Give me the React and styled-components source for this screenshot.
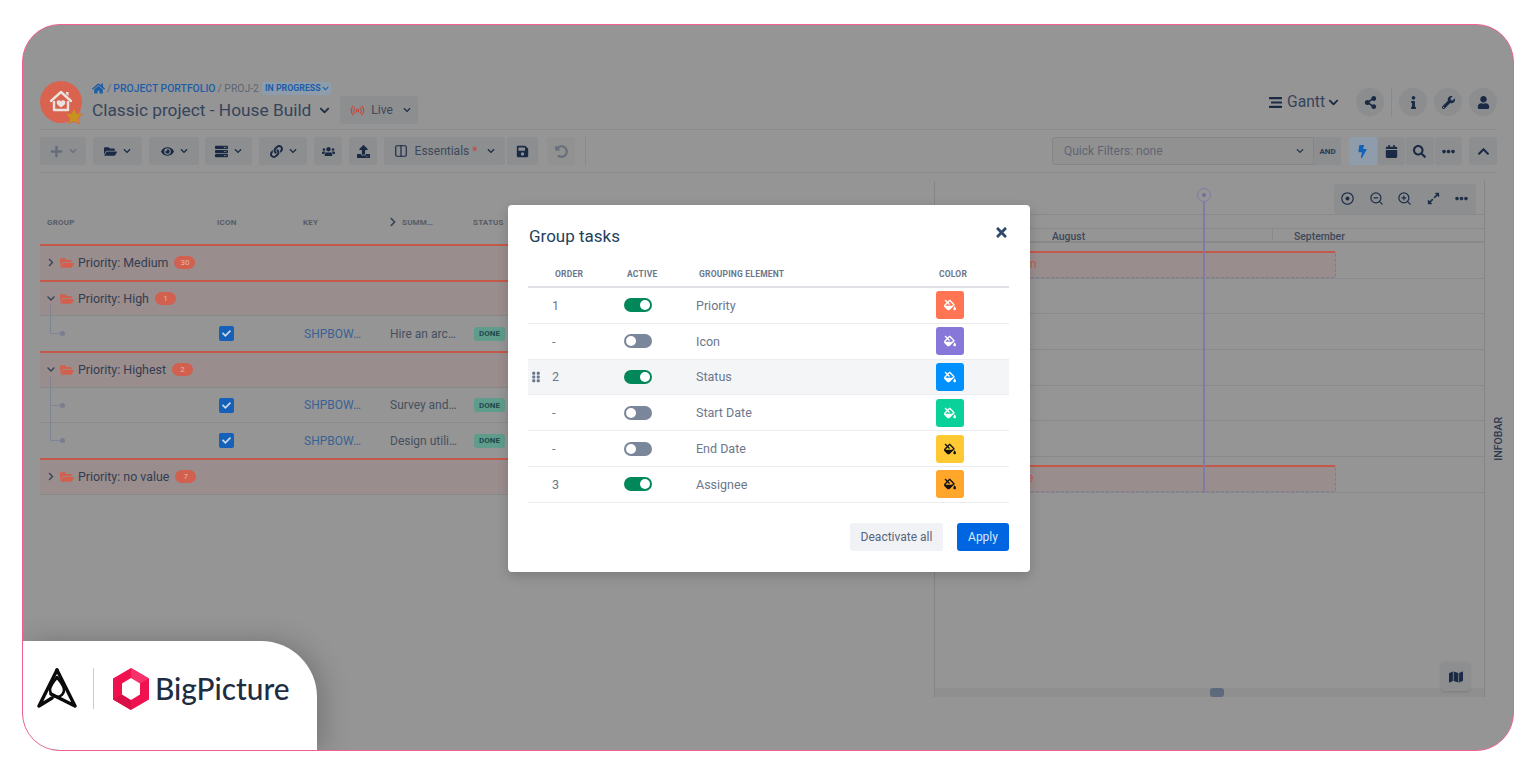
import React from 'react';
import styled, { createGlobalStyle } from 'styled-components';
import {
  FaHome, FaFolderOpen, FaEye, FaServer, FaLink, FaUsers, FaSave, FaBolt, FaCalendar, FaSearch,
  FaEllipsisH, FaChevronUp, FaShareAlt, FaInfo, FaWrench, FaUser, FaTimes, FaFillDrip, FaPlus,
  FaExpandAlt, FaRegDotCircle, FaMap, FaCheck, FaUpload, FaChevronDown, FaChevronRight, FaGripVertical,
  FaUndoAlt,
} from 'react-icons/fa';
import { Radio, Columns2, ZoomIn, ZoomOut } from 'lucide-react';

const GlobalStyle = createGlobalStyle`
  html, body {
    margin: 0;
    height: 100%;
    overflow: hidden;
    background: #fff;
    font-family: Roboto, "Liberation Sans", sans-serif;
  }
  * { box-sizing: border-box; }
`;

const Frame = styled.div`
  position: relative;
  width: 1492px;
  height: 727px;
  margin: 24px 0 0 22px;
  padding: 56px 16px 0 17px;
  background: #959595;
  border: 1px solid #f2608f;
  border-radius: 38px;
  overflow: hidden;
`;

const Header = styled.header`
  display: flex;
  justify-content: space-between;
  height: 49px;
  border-bottom: 1px solid #898989;
`;

const HeaderLeft = styled.div`
  display: flex;
  gap: 8px;
`;

const TitleColumn = styled.div`
  display: flex;
  flex-direction: column;
`;

const Breadcrumb = styled.div`
  display: flex;
  align-items: center;
  gap: 2px;
  height: 14px;
  font-size: 10.4px;
  color: #5e6673;
  svg { color: #1c5ea8; font-size: 13px; }
`;

const CrumbLink = styled.span`
  color: #1c5ea8;
  font-weight: 500;
`;

const StatusTag = styled.span`
  display: inline-flex;
  align-items: center;
  gap: 1px;
  margin-left: 1px;
  padding: 0 2px 0 3px;
  height: 13px;
  border-radius: 2px;
  background: #8e9cab;
  color: #1c5ea8;
  font-size: 8.8px;
  font-weight: 700;
  svg { font-size: 7px; margin: 0; }
`;

const TitleRow = styled.div`
  display: flex;
  align-items: center;
  height: 30px;
  color: #36445a;
  svg { color: #1f2d45; }
`;

const Title = styled.h1`
  margin: 0 8px 0 0;
  font-size: 17.3px;
  font-weight: 400;
`;

const LiveButton = styled.button`
  display: flex;
  align-items: center;
  height: 28px;
  width: 78px;
  margin-left: 10px;
  padding: 0 0 0 10px;
  gap: 6px;
  border: 0;
  border-radius: 3px;
  background: #8d8e90;
  color: #3d4859;
  font: 400 12px Roboto, sans-serif;
`;

const HeaderRight = styled.div`
  display: flex;
  align-items: center;
  height: 28px;
  margin-top: 7px;
`;

const ViewSwitch = styled.div`
  display: flex;
  align-items: center;
  gap: 3px;
  margin-right: 17px;
  color: #36445a;
  font-size: 15.6px;
  svg { color: #1a2a44; }
`;

const RoundButton = styled.button`
  display: flex;
  align-items: center;
  justify-content: center;
  width: 28px;
  height: 28px;
  margin-left: ${p => p.$gap || 0}px;
  padding: 0;
  border: 0;
  border-radius: 50%;
  background: #8c8d8f;
  color: #1a2a44;
  font-size: 13px;
`;

const HeaderSplit = styled.span`
  width: 1px;
  height: 28px;
  margin-left: 7px;
  background: #898989;
`;

const Toolbar = styled.div`
  display: flex;
  justify-content: space-between;
  height: 43px;
  padding-top: 7px;
  border-bottom: 1px solid #898989;
`;

const ToolGroup = styled.div`
  display: flex;
  height: 28px;
`;

const ToolButton = styled.button`
  display: flex;
  align-items: center;
  justify-content: center;
  gap: ${p => p.$iconGap || 6}px;
  width: ${p => p.$w || 28}px;
  height: 28px;
  margin-left: ${p => p.$gap ?? 7}px;
  padding: 0;
  border: 0;
  border-radius: 3px;
  background: ${p => (p.$active ? '#8f9cab' : p.$soft ? '#919192' : '#8d8e90')};
  color: ${p => (p.$active ? '#1262b8' : p.$muted ? '#656d7b' : '#1a2a44')};
  font: 400 13px Roboto, sans-serif;
`;

const ToolLabel = styled.span`
  font-size: 12px;
  color: #3d4859;
  i { color: #c2493f; font-style: normal; }
`;

const ToolSplit = styled.span`
  width: 1px;
  height: 28px;
  margin-left: 10px;
  background: #898989;
`;

const QuickFilter = styled.div`
  display: flex;
  align-items: center;
  justify-content: space-between;
  width: 262px;
  padding: 0 9px 0 11px;
  border: 1px solid #858585;
  border-radius: 3px 0 0 3px;
  background: #919191;
  color: #5f6673;
  font-size: 12px;
  svg { color: #2b3950; }
`;

const AndTag = styled.span`
  display: flex;
  align-items: center;
  justify-content: center;
  width: 27px;
  border-radius: 0 3px 3px 0;
  background: #8d8e90;
  color: #2c3a50;
  font-size: 8px;
  font-weight: 700;
`;

const Main = styled.div`
  display: flex;
  height: 524px;
  margin-right: -14px;
`;

const TablePane = styled.section`
  width: 894px;
  flex: none;
`;

const TableHead = styled.div`
  display: grid;
  grid-template-columns: 177px 86px 85px 85px 1fr;
  align-items: center;
  height: 71px;
  padding-top: 27px;
  color: #565c67;
  font-size: 8px;
  font-weight: 700;
  letter-spacing: 0.2px;
`;

const HeadCell = styled.span`
  display: flex;
  align-items: center;
  gap: 4px;
  padding-left: ${p => p.$pad || 0}px;
  svg { color: #37445a; font-size: 10px; }
`;

const GroupRow = styled.div`
  display: flex;
  align-items: center;
  height: 35.7px;
  padding-left: 7px;
  border-top: 2px solid #c4584a;
  background: #9a8d8d;
  color: #323e52;
  font-size: 12.4px;
`;

const Caret = styled.span`
  display: flex;
  justify-content: center;
  width: 8px;
  font-size: 9px;
  color: #36445a;
`;

const Folder = styled.span`
  display: flex;
  margin: 0 4px 0 5px;
  color: #d2604f;
  font-size: 14px;
`;

const Badge = styled.span`
  display: flex;
  align-items: center;
  justify-content: center;
  width: 21px;
  height: 13px;
  margin-left: 6px;
  border-radius: 7px;
  background: #d2604f;
  color: #e6b3aa;
  font-size: 8px;
`;

const TaskRow = styled.div`
  display: grid;
  grid-template-columns: 177px 86px 85px 85px 1fr;
  align-items: center;
  height: 35.7px;
  border-top: 1px solid #898989;
  color: #45505f;
  font-size: 12px;
`;

const Tree = styled.span`
  position: relative;
  display: block;
  height: 100%;
  &::before {
    content: '';
    position: absolute;
    left: 10px;
    top: ${p => (p.$first ? -12 : 0)}px;
    bottom: ${p => (p.$last ? 17 : 0)}px;
    width: 1px;
    background: #7f8494;
  }
  &::after {
    content: '';
    position: absolute;
    left: 10px;
    top: 17px;
    width: 10px;
    height: 1px;
    background: #7f8494;
  }
`;

const TreeDot = styled.i`
  position: absolute;
  left: 20px;
  top: 15px;
  width: 5px;
  height: 5px;
  border-radius: 50%;
  background: #787d90;
`;

const CheckIcon = styled.span`
  display: flex;
  align-items: center;
  justify-content: center;
  width: 15px;
  height: 15px;
  margin-left: 2px;
  border-radius: 2px;
  background: #1560b8;
  color: #c6d6e6;
  font-size: 9px;
`;

const KeyLink = styled.span`
  padding-left: 1px;
  color: #3a6295;
`;

const Summary = styled.span`
  padding-left: 2px;
`;

const DoneTag = styled.span`
  display: flex;
  align-items: center;
  justify-content: center;
  width: 31px;
  height: 14px;
  margin-left: 1px;
  border-radius: 3px;
  background: #5f9c8c;
  color: #1c4a4c;
  font-size: 8px;
  font-weight: 700;
`;

const GanttPane = styled.section`
  position: relative;
  display: flex;
  flex-direction: column;
  width: 551px;
  height: 516px;
  flex: none;
  margin-top: 8px;
  border-left: 1px solid #858585;
  border-right: 1px solid #858585;
`;

const GanttTools = styled.div`
  display: flex;
  justify-content: flex-end;
  height: 34px;
  padding: 3px 8px 0 0;
  border-bottom: 1px solid #898989;
`;

const ToolStrip = styled.div`
  display: flex;
  border-radius: 3px;
  background: #8d8e90;
`;

const StripButton = styled.span`
  display: flex;
  align-items: center;
  justify-content: center;
  width: 28.5px;
  height: 28px;
  color: #1f2f48;
  font-size: 13px;
`;

const BlankBand = styled.div`
  height: 14px;
  border-bottom: 1px solid #898989;
`;

const MonthBand = styled.div`
  display: flex;
  height: 14px;
  border-bottom: 2px solid #898989;
  color: #3d4859;
  font-size: 10.4px;
  font-weight: 500;
`;

const Month = styled.span`
  width: ${p => p.$w}px;
  padding-left: ${p => p.$pad}px;
  line-height: 15px;
  border-right: ${p => (p.$split ? '1px solid #898989' : '0')};
`;

const TimeRow = styled.div`
  height: 35.7px;
  padding-top: 8px;
  border-bottom: 1px solid #898989;
`;

const GroupBar = styled.div`
  width: 401px;
  height: 27px;
  border-top: 2px solid #c4584a;
  border-right: 1px dashed #7d7d90;
  border-bottom: 1px dashed #7d7d90;
  border-radius: 2px;
  background: #9a8d8d;
  color: #c4584a;
  font-size: 12px;
  line-height: 23px;
  padding-left: ${p => p.$pad}px;
  white-space: nowrap;
`;

const TodayLine = styled.div`
  position: absolute;
  left: 268px;
  top: 21px;
  width: 2px;
  height: 291px;
  background: #7f7ba6;
`;

const TodayDot = styled.span`
  position: absolute;
  left: 262px;
  top: 7px;
  width: 14px;
  height: 14px;
  border: 1.5px solid #7f7ba6;
  border-radius: 50%;
  &::after {
    content: '';
    position: absolute;
    left: 3.5px;
    top: 3.5px;
    width: 4px;
    height: 4px;
    border-radius: 50%;
    background: #6f6f98;
  }
`;

const ScrollTrack = styled.div`
  position: relative;
  height: 9px;
  margin-top: auto;
  background: #8f8f8f;
`;

const ScrollThumb = styled.span`
  position: absolute;
  left: 275px;
  top: 0;
  width: 14px;
  height: 9px;
  border-radius: 3px;
  background: #5d6a7d;
`;

const MapButton = styled.button`
  position: absolute;
  right: 14px;
  bottom: 6px;
  display: flex;
  align-items: center;
  justify-content: center;
  width: 29px;
  height: 29px;
  padding: 0;
  border: 0;
  border-radius: 4px;
  background: #8d8e90;
  color: #1a2a44;
  font-size: 14px;
  box-shadow: 0 1px 3px rgba(0, 0, 0, 0.12);
`;

const InfoStrip = styled.div`
  display: flex;
  justify-content: center;
  width: 28px;
  padding-top: 244px;
`;

const InfoText = styled.span`
  height: fit-content;
  writing-mode: vertical-rl;
  transform: rotate(180deg);
  color: #2e3b50;
  font-size: 10.5px;
  font-weight: 500;
`;

const Modal = styled.div`
  position: absolute;
  left: 485px;
  top: 180px;
  width: 522px;
  height: 367px;
  padding: 20px 21px 0 20px;
  border-radius: 4px;
  background: #fff;
  box-shadow: 0 4px 12px rgba(0, 0, 0, 0.18);
`;

const ModalHead = styled.div`
  display: flex;
  justify-content: space-between;
  height: 37px;
`;

const ModalTitle = styled.h2`
  margin: 0;
  padding-left: 1px;
  color: #243f5c;
  font-size: 17px;
  font-weight: 400;
  line-height: 22px;
`;

const CloseButton = styled.button`
  height: 16px;
  padding: 0;
  border: 0;
  background: none;
  color: #2d4a6b;
  font-size: 15px;
  line-height: 16px;
`;

const GridHead = styled.div`
  display: grid;
  grid-template-columns: 72px 72px 240px 1fr;
  align-items: center;
  height: 26px;
  padding-left: 27px;
  border-bottom: 2px solid #dfe1e6;
  color: #6b778c;
  font-size: 8.5px;
  font-weight: 700;
  letter-spacing: 0.2px;
`;

const GridRow = styled.div`
  position: relative;
  display: grid;
  grid-template-columns: 72px 72px 240px 1fr;
  align-items: center;
  height: 35.8px;
  padding-left: 24px;
  border-bottom: 1px solid #ebecf0;
  background: ${p => (p.$hover ? '#f4f5f7' : '#fff')};
  color: #6b778c;
  font-size: 12.5px;
`;

const DragHandle = styled.span`
  position: absolute;
  left: 2px;
  top: 11px;
  width: 10px;
  height: 13px;
  color: #6b778c;
  font-size: 12px;
  line-height: 0;
`;

const Toggle = styled.span`
  position: relative;
  display: block;
  width: 28px;
  height: 14px;
  border-radius: 7px;
  background: ${p => (p.$on ? '#00875a' : '#7a869a')};
  &::after {
    content: '';
    position: absolute;
    top: 2px;
    left: ${p => (p.$on ? 16 : 2)}px;
    width: 10px;
    height: 10px;
    border-radius: 50%;
    background: #fff;
  }
`;

const Swatch = styled.span`
  display: flex;
  align-items: center;
  justify-content: center;
  width: 28px;
  height: 28px;
  border-radius: 3px;
  background: ${p => p.$bg};
  color: ${p => p.$fg};
  font-size: 12px;
`;

const ModalFooter = styled.div`
  display: flex;
  justify-content: flex-end;
  gap: 14px;
  margin-top: 20px;
`;

const Button = styled.button`
  width: ${p => p.$w}px;
  height: 28px;
  padding: 0;
  border: 0;
  border-radius: 3px;
  background: ${p => (p.$primary ? '#0065e0' : '#f1f2f5')};
  color: ${p => (p.$primary ? '#dbe9fb' : '#56657d')};
  font: 400 12px Roboto, sans-serif;
`;

const LogoCard = styled.div`
  position: absolute;
  left: 0;
  bottom: 0;
  display: flex;
  align-items: center;
  width: 294px;
  height: 109px;
  padding: 0 0 14px 14px;
  background: #fff;
  border-top-right-radius: 56px;
  box-shadow: 6px 0 26px rgba(40, 40, 50, 0.28);
`;

const LogoSplit = styled.span`
  width: 1px;
  height: 41px;
  margin: 0 18px 0 16px;
  background: #c9ccd1;
`;

const Wordmark = styled.span`
  margin-left: 5px;
  color: #1f2d42;
  font-family: Lato, "Noto Sans", sans-serif;
  font-size: 29.8px;
  font-weight: 500;
`;

const AvatarLogo = () => (
  <svg width="44" height="46" viewBox="0 0 44 46" style={{ flex: 'none' }}>
    <circle cx="21" cy="21" r="21" fill="#d9634f" />
    <path d="M11 20 21 11l10 9" fill="none" stroke="#e9e2df" strokeWidth="2.4" strokeLinecap="round" strokeLinejoin="round" />
    <path d="M14 20v9h14v-9" fill="none" stroke="#e9e2df" strokeWidth="2.4" strokeLinejoin="round" />
    <path d="M26 13v-2h2.500v4" fill="#e9e2df" />
    <path d="M21 26.500c-3-2-4.300-3.300-4.300-5 0-2.500 3.300-3 4.300-.8 1-2.200 4.300-1.700 4.300.8 0 1.700-1.300 3-4.300 5z" fill="#e9e2df" />
    <path d="m34 27 2.600 5.300 5.800.8-4.200 4.100 1 5.800-5.200-2.700-5.200 2.700 1-5.800-4.200-4.100 5.800-.8z" fill="#c8921f" stroke="#d9634f" strokeWidth="0.8" />
  </svg>
);

const GanttIcon = () => (
  <svg width="13" height="11" viewBox="0 0 13 11" fill="currentColor" style={{ marginRight: 2 }}>
    <rect x="0" y="0" width="13" height="2.200" rx="0.5" />
    <rect x="2" y="4.400" width="11" height="2.200" rx="0.5" />
    <rect x="0" y="8.800" width="13" height="2.200" rx="0.5" />
  </svg>
);

const ArrowLogo = () => (
  <svg width="40" height="41" viewBox="0 0 40 41" fill="none" stroke="#0b0b0b" strokeLinejoin="round" strokeLinecap="round">
    <path d="M20 2 2 38l13-8" strokeWidth="3.400" />
    <path d="M20 2 38 38 14 26" strokeWidth="3.400" />
    <path d="M20 9c3 5 7 8 7 13a7 7 0 0 1-14 0c0-5 4-8 7-13z" strokeWidth="2.600" />
  </svg>
);

const HexLogo = () => (
  <svg width="38" height="42" viewBox="0 0 38 42">
    <path d="M19 0 37 10.500v21L19 42 1 31.500v-21z" fill="#f0124f" />
    <path d="M19 0 37 10.500 28 15.500 19 10z" fill="#f6326a" />
    <path d="M1 31.500 10 26.500 19 32v10z" fill="#d90f48" />
    <path d="M19 10 28 15.500v11L19 32l-9-5.500v-11z" fill="#fff" />
  </svg>
);

const taskRowsHigh = [{ name: 'Hire an arc…', first: true, last: true }];
const taskRowsHighest = [
  { name: 'Survey and…', first: true, last: false },
  { name: 'Design utili…', first: false, last: true },
];

const grouping = [
  { order: '1', on: true, name: 'Priority', bg: '#ff7452', fg: '#fff' },
  { order: '-', on: false, name: 'Icon', bg: '#8777d9', fg: '#fff' },
  { order: '2', on: true, name: 'Status', bg: '#0091ff', fg: '#fff', hover: true },
  { order: '-', on: false, name: 'Start Date', bg: '#0ad19a', fg: '#fff' },
  { order: '-', on: false, name: 'End Date', bg: '#ffc933', fg: '#111' },
  { order: '3', on: true, name: 'Assignee', bg: '#ffa62b', fg: '#111' },
];

function Group({ label, count, open }) {
  return (
    <GroupRow>
      <Caret>{open ? <FaChevronDown /> : <FaChevronRight />}</Caret>
      <Folder><FaFolderOpen /></Folder>
      {label}
      <Badge>{count}</Badge>
    </GroupRow>
  );
}

function Task({ name, first, last }) {
  return (
    <TaskRow>
      <Tree $first={first} $last={last}><TreeDot /></Tree>
      <CheckIcon><FaCheck /></CheckIcon>
      <KeyLink>SHPBOW…</KeyLink>
      <Summary>{name}</Summary>
      <DoneTag>DONE</DoneTag>
    </TaskRow>
  );
}

export default function App() {
  return (
    <>
      <GlobalStyle />
      <Frame>
        <Header>
          <HeaderLeft>
            <AvatarLogo />
            <TitleColumn>
              <Breadcrumb>
                <FaHome />/ <CrumbLink>PROJECT PORTFOLIO</CrumbLink> / PROJ-2
                <StatusTag>IN PROGRESS <FaChevronDown /></StatusTag>
              </Breadcrumb>
              <TitleRow>
                <Title>Classic project - House Build</Title>
                <FaChevronDown size={11} />
                <LiveButton>
                  <Radio size={15} color="#c2493f" />
                  Live
                  <FaChevronDown size={8} style={{ marginLeft: 4 }} />
                </LiveButton>
              </TitleRow>
            </TitleColumn>
          </HeaderLeft>
          <HeaderRight>
            <ViewSwitch><GanttIcon /> Gantt <FaChevronDown size={11} /></ViewSwitch>
            <RoundButton><FaShareAlt /></RoundButton>
            <HeaderSplit />
            <RoundButton $gap={7}><FaInfo /></RoundButton>
            <RoundButton $gap={7}><FaWrench /></RoundButton>
            <RoundButton $gap={7}><FaUser /></RoundButton>
          </HeaderRight>
        </Header>

        <Toolbar>
          <ToolGroup>
            <ToolButton $w={46} $gap={0} $muted><FaPlus /><FaChevronDown size={8} /></ToolButton>
            <ToolButton $w={49}><FaFolderOpen /><FaChevronDown size={8} /></ToolButton>
            <ToolButton $w={50}><FaEye /><FaChevronDown size={8} /></ToolButton>
            <ToolButton $w={47} $gap={6}><FaServer /><FaChevronDown size={8} /></ToolButton>
            <ToolButton $w={48}><FaLink /><FaChevronDown size={8} /></ToolButton>
            <ToolButton><FaUsers /></ToolButton>
            <ToolButton><FaUpload /></ToolButton>
            <ToolButton $w={121} $iconGap={7}>
              <Columns2 size={14} />
              <ToolLabel>Essentials <i>*</i></ToolLabel>
              <FaChevronDown size={8} style={{ marginLeft: 3 }} />
            </ToolButton>
            <ToolButton $w={31} $gap={2}><FaSave /></ToolButton>
            <ToolButton $gap={9} $muted $soft><FaUndoAlt /></ToolButton>
            <ToolSplit />
          </ToolGroup>
          <ToolGroup>
            <QuickFilter>Quick Filters: none <FaChevronDown size={8} /></QuickFilter>
            <AndTag>AND</AndTag>
            <ToolButton $active $gap={8} $w={27.5}><FaBolt /></ToolButton>
            <ToolButton $gap={1} $w={27.5}><FaCalendar /></ToolButton>
            <ToolButton $gap={1} $w={27.5}><FaSearch /></ToolButton>
            <ToolButton $gap={1} $w={27.5}><FaEllipsisH /></ToolButton>
            <ToolButton $gap={7}><FaChevronUp /></ToolButton>
          </ToolGroup>
        </Toolbar>

        <Main>
          <TablePane>
            <TableHead>
              <HeadCell $pad={7}>GROUP</HeadCell>
              <HeadCell>ICON</HeadCell>
              <HeadCell>KEY</HeadCell>
              <HeadCell><FaChevronRight />SUMM…</HeadCell>
              <HeadCell>STATUS</HeadCell>
            </TableHead>
            <Group label="Priority: Medium" count="30" />
            <Group label="Priority: High" count="1" open />
            {taskRowsHigh.map(t => <Task key={t.name} {...t} />)}
            <Group label="Priority: Highest" count="2" open />
            {taskRowsHighest.map(t => <Task key={t.name} {...t} />)}
            <Group label="Priority: no value" count="7" />
            <TaskRow />
          </TablePane>

          <GanttPane>
            <GanttTools>
              <ToolStrip>
                <StripButton><FaRegDotCircle /></StripButton>
                <StripButton><ZoomOut size={15} /></StripButton>
                <StripButton><ZoomIn size={15} /></StripButton>
                <StripButton><FaExpandAlt /></StripButton>
                <StripButton><FaEllipsisH /></StripButton>
              </ToolStrip>
            </GanttTools>
            <BlankBand />
            <MonthBand>
              <Month $w={338} $pad={117} $split>August</Month>
              <Month $w={200} $pad={21}>September</Month>
            </MonthBand>
            <TimeRow><GroupBar $pad={14}>Priority: Medium</GroupBar></TimeRow>
            <TimeRow />
            <TimeRow />
            <TimeRow />
            <TimeRow />
            <TimeRow />
            <TimeRow><GroupBar $pad={10}>Priority: no value</GroupBar></TimeRow>
            <TodayDot />
            <TodayLine />
            <ScrollTrack><ScrollThumb /></ScrollTrack>
            <MapButton><FaMap /></MapButton>
          </GanttPane>

          <InfoStrip><InfoText>INFOBAR</InfoText></InfoStrip>
        </Main>

        <Modal>
          <ModalHead>
            <ModalTitle>Group tasks</ModalTitle>
            <CloseButton aria-label="Close"><FaTimes /></CloseButton>
          </ModalHead>
          <GridHead>
            <span>ORDER</span>
            <span>ACTIVE</span>
            <span>GROUPING ELEMENT</span>
            <span>COLOR</span>
          </GridHead>
          {grouping.map(row => (
            <GridRow key={row.name} $hover={row.hover}>
              {row.hover && <DragHandle><FaGripVertical /></DragHandle>}
              <span>{row.order}</span>
              <Toggle $on={row.on} />
              <span>{row.name}</span>
              <Swatch $bg={row.bg} $fg={row.fg}><FaFillDrip /></Swatch>
            </GridRow>
          ))}
          <ModalFooter>
            <Button $w={93}>Deactivate all</Button>
            <Button $w={52} $primary>Apply</Button>
          </ModalFooter>
        </Modal>

        <LogoCard>
          <ArrowLogo />
          <LogoSplit />
          <HexLogo />
          <Wordmark>BigPicture</Wordmark>
        </LogoCard>
      </Frame>
    </>
  );
}
